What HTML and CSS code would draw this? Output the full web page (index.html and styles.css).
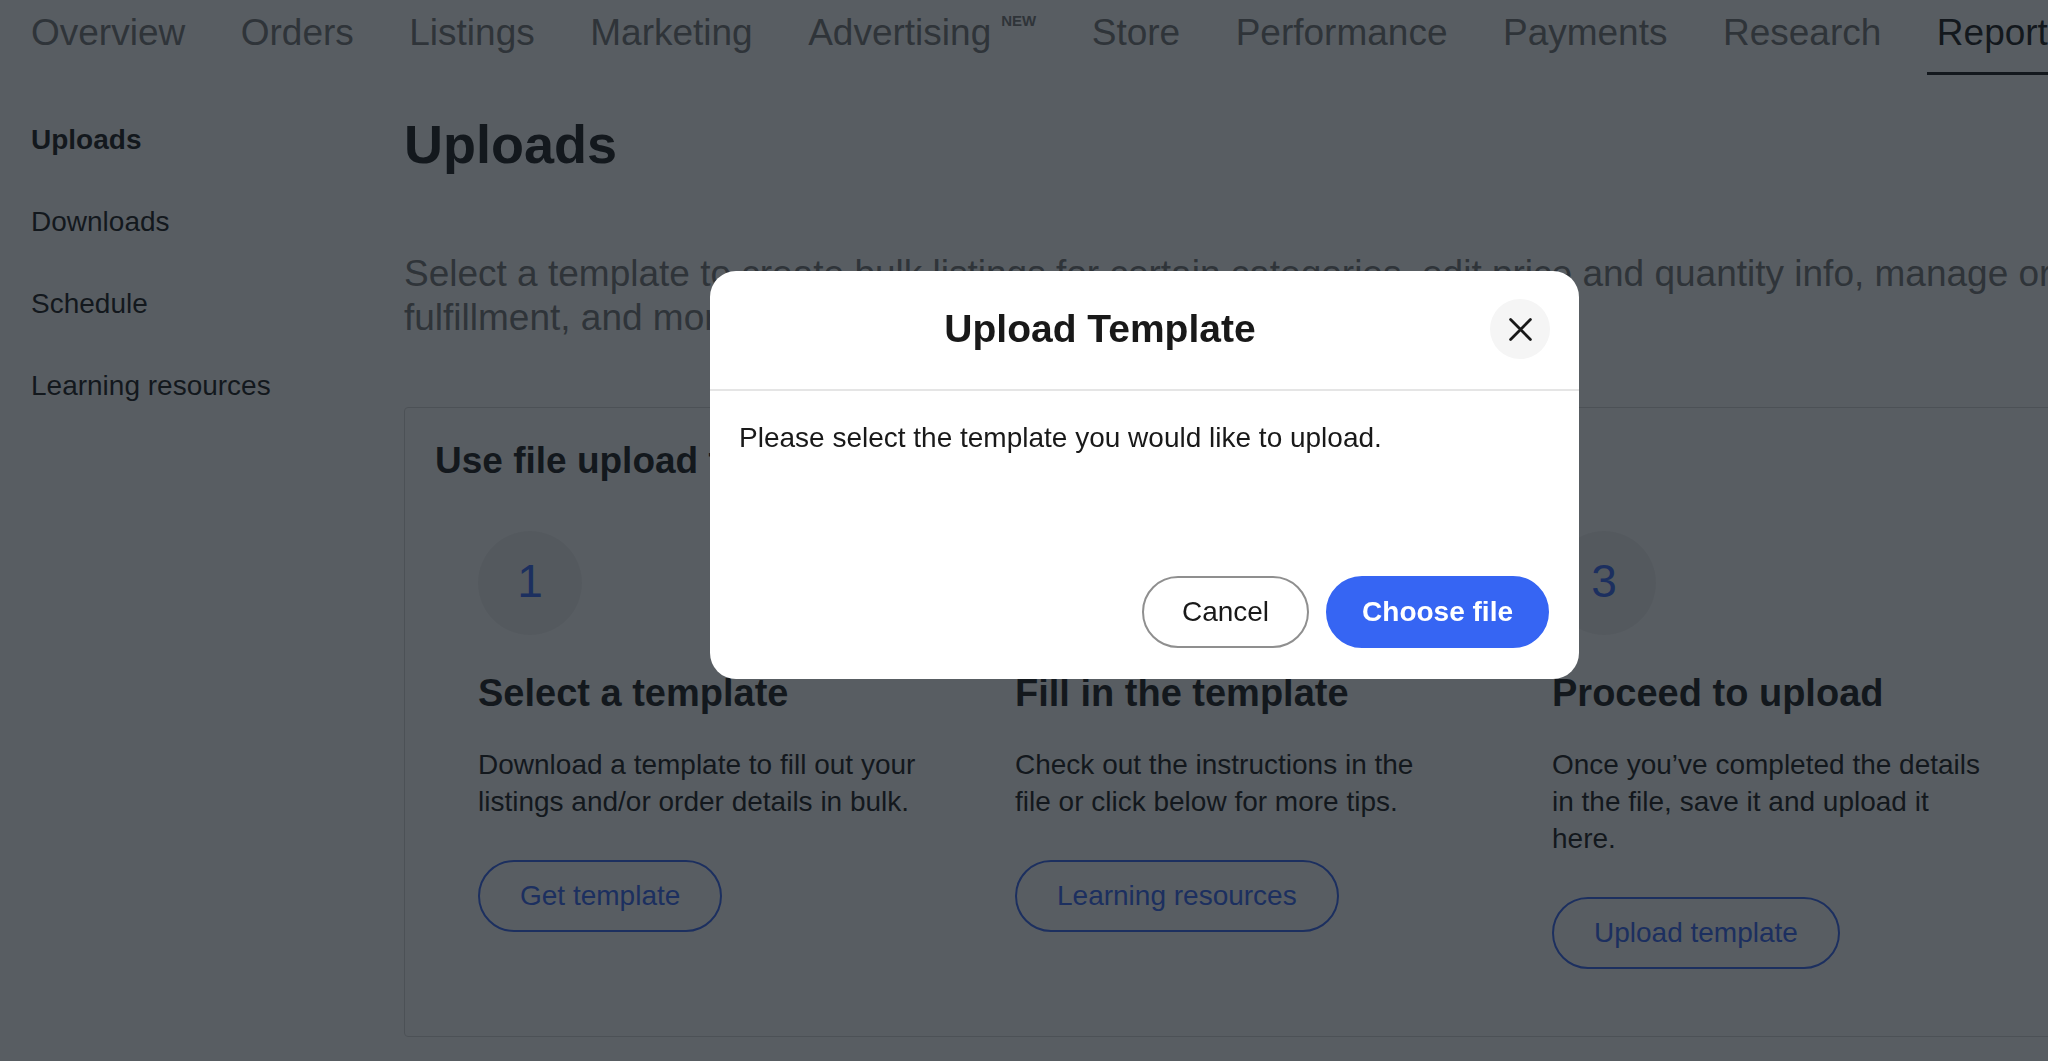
FILE: index.html
```html
<!DOCTYPE html>
<html lang="en">
<head>
<meta charset="utf-8">
<title>Uploads - Reports</title>
<link rel="stylesheet" href="styles.css">
</head>
<body>
<div class="page">
  <nav class="topnav">
    <a class="tab">Overview</a>
    <a class="tab">Orders</a>
    <a class="tab">Listings</a>
    <a class="tab">Marketing</a>
    <a class="tab">Advertising<span class="new">NEW</span></a>
    <a class="tab">Store</a>
    <a class="tab">Performance</a>
    <a class="tab">Payments</a>
    <a class="tab">Research</a>
    <a class="tab active">Reports</a>
  </nav>
  <div class="layout">
    <aside class="sidenav">
      <a class="side-link active">Uploads</a>
      <a class="side-link">Downloads</a>
      <a class="side-link">Schedule</a>
      <a class="side-link">Learning resources</a>
    </aside>
    <main class="main">
      <h1 class="page-title">Uploads</h1>
      <p class="lead">Select a template to create bulk listings for certain categories, edit price and quantity info, manage order fulfillment, and more.</p>
      <section class="card">
        <h2 class="card-title">Use file upload templates</h2>
        <ol class="steps">
          <li class="step">
            <div class="step-num">1</div>
            <h3 class="step-title">Select a template</h3>
            <p class="step-text">Download a template to fill out your listings and/or order details in bulk.</p>
            <a class="btn-outline">Get template</a>
          </li>
          <li class="step">
            <div class="step-num">2</div>
            <h3 class="step-title">Fill in the template</h3>
            <p class="step-text">Check out the instructions in the file or click below for more tips.</p>
            <a class="btn-outline">Learning resources</a>
          </li>
          <li class="step">
            <div class="step-num">3</div>
            <h3 class="step-title">Proceed to upload</h3>
            <p class="step-text">Once you’ve completed the details in the file, save it and upload it here.</p>
            <a class="btn-outline">Upload template</a>
          </li>
        </ol>
      </section>
    </main>
  </div>
</div>

<div class="scrim"></div>
<div class="dialog" role="dialog" aria-labelledby="dlg-title">
  <div class="dialog-header">
    <h2 class="dialog-title" id="dlg-title">Upload Template</h2>
    <button class="dialog-close" aria-label="Close">
      <svg width="23" height="23" viewBox="0 0 23 23"><path d="M1.6 1.6L21.4 21.4M21.4 1.6L1.6 21.4" stroke="#191919" stroke-width="2.8" stroke-linecap="round" fill="none"/></svg>
    </button>
  </div>
  <div class="dialog-body">
    <p>Please select the template you would like to upload.</p>
  </div>
  <div class="dialog-footer">
    <button class="btn btn-secondary">Cancel</button>
    <button class="btn btn-primary">Choose file</button>
  </div>
</div>
</body>
</html>
```
FILE: styles.css
```css
html, body {
  margin: 0;
  padding: 0;
}
body {
  overflow: hidden;
  background: #ffffff;
  color: #191919;
  font-family: "Liberation Sans", Arial, sans-serif;
}

.page {
  width: 2300px;
}

/* top navigation */
.topnav {
  display: flex;
  gap: 35.5px;
  padding-left: 21px;
  white-space: nowrap;
}
.tab {
  display: block;
  padding: 11px 10px 17px;
  font-size: 37px;
  line-height: 44px;
  color: #767676;
  border-bottom: 3px solid transparent;
}
.tab.active {
  color: #191919;
  border-bottom-color: #191919;
}
.new {
  display: inline-block;
  vertical-align: top;
  margin: 2px 0 0 10px;
  font-size: 15px;
  line-height: 15px;
  font-weight: bold;
  color: #767676;
}

/* layout */
.layout {
  display: grid;
  grid-template-columns: 373px 1fr;
  padding-left: 31px;
}

.sidenav {
  display: flex;
  flex-direction: column;
  gap: 45px;
  padding-top: 46px;
}
.side-link {
  font-size: 28px;
  line-height: 37px;
  color: #191919;
}
.side-link.active {
  font-weight: bold;
}

.main {
  min-width: 0;
}
.page-title {
  margin: 36px 0 0;
  font-size: 54px;
  line-height: 66px;
  font-weight: bold;
  color: #191919;
}
.lead {
  margin: 75px 0 0;
  max-width: 1750px;
  font-size: 37px;
  line-height: 44px;
  color: #767676;
}

/* card */
.card {
  margin-top: 67px;
  border: 1px solid #d6d6d6;
  border-radius: 4px;
  padding: 31px 30px 67px;
}
.card-title {
  margin: 0;
  font-size: 37px;
  line-height: 44px;
  font-weight: bold;
}
.steps {
  list-style: none;
  margin: 48px 0 0;
  padding: 0 0 0 43px;
  display: grid;
  grid-template-columns: repeat(3, 440px);
  column-gap: 97px;
}
.step {
  display: flex;
  flex-direction: column;
  align-items: flex-start;
}
.step-num {
  width: 104px;
  height: 104px;
  border-radius: 50%;
  background: #f2f2f2;
  color: #3665f3;
  font-size: 46px;
  line-height: 1;
  display: flex;
  align-items: center;
  justify-content: center;
  padding-bottom: 4px;
  box-sizing: border-box;
}
.step-title {
  margin: 36px 0 0;
  font-size: 38px;
  line-height: 44px;
  font-weight: bold;
}
.step-text {
  margin: 31px 0 0;
  font-size: 28px;
  line-height: 37px;
}
.btn-outline {
  margin-top: 40px;
  display: inline-flex;
  align-items: center;
  box-sizing: border-box;
  height: 72px;
  padding: 0 40px;
  border: 2px solid #3665f3;
  border-radius: 36px;
  color: #3665f3;
  font-size: 28px;
  white-space: nowrap;
}

/* dialog */
.scrim {
  position: fixed;
  inset: 0;
  background: rgba(17, 24, 32, 0.7);
}
.dialog {
  position: fixed;
  left: 710px;
  top: 271px;
  width: 869px;
  background: #ffffff;
  border-radius: 26px;
  overflow: hidden;
}
.dialog-header {
  display: flex;
  align-items: center;
  gap: 29px;
  padding: 28px 29px 30px;
  border-bottom: 2px solid #e5e5e5;
}
.dialog-title {
  flex: 1;
  margin: 0;
  text-align: center;
  font-size: 39px;
  line-height: 44px;
  font-weight: bold;
  color: #191919;
}
.dialog-close {
  width: 60px;
  height: 60px;
  flex: none;
  border: none;
  border-radius: 50%;
  background: #f5f5f5;
  padding: 0;
  display: flex;
  align-items: center;
  justify-content: center;
}
.dialog-body {
  box-sizing: border-box;
  min-height: 185px;
  padding: 28px 29px 0;
}
.dialog-body p {
  margin: 0;
  font-size: 28px;
  line-height: 37px;
  color: #191919;
}
.dialog-footer {
  display: flex;
  justify-content: flex-end;
  gap: 17px;
  padding: 0 30px 31px;
}
.btn {
  box-sizing: border-box;
  height: 72px;
  border-radius: 36px;
  font-family: "Liberation Sans", Arial, sans-serif;
  font-size: 28px;
  white-space: nowrap;
}
.btn-secondary {
  padding: 0 38px;
  background: #ffffff;
  border: 2px solid #8f8f8f;
  color: #191919;
}
.btn-primary {
  padding: 0 34px;
  background: #3665f3;
  border: 2px solid #3665f3;
  color: #ffffff;
  font-weight: bold;
}
```
